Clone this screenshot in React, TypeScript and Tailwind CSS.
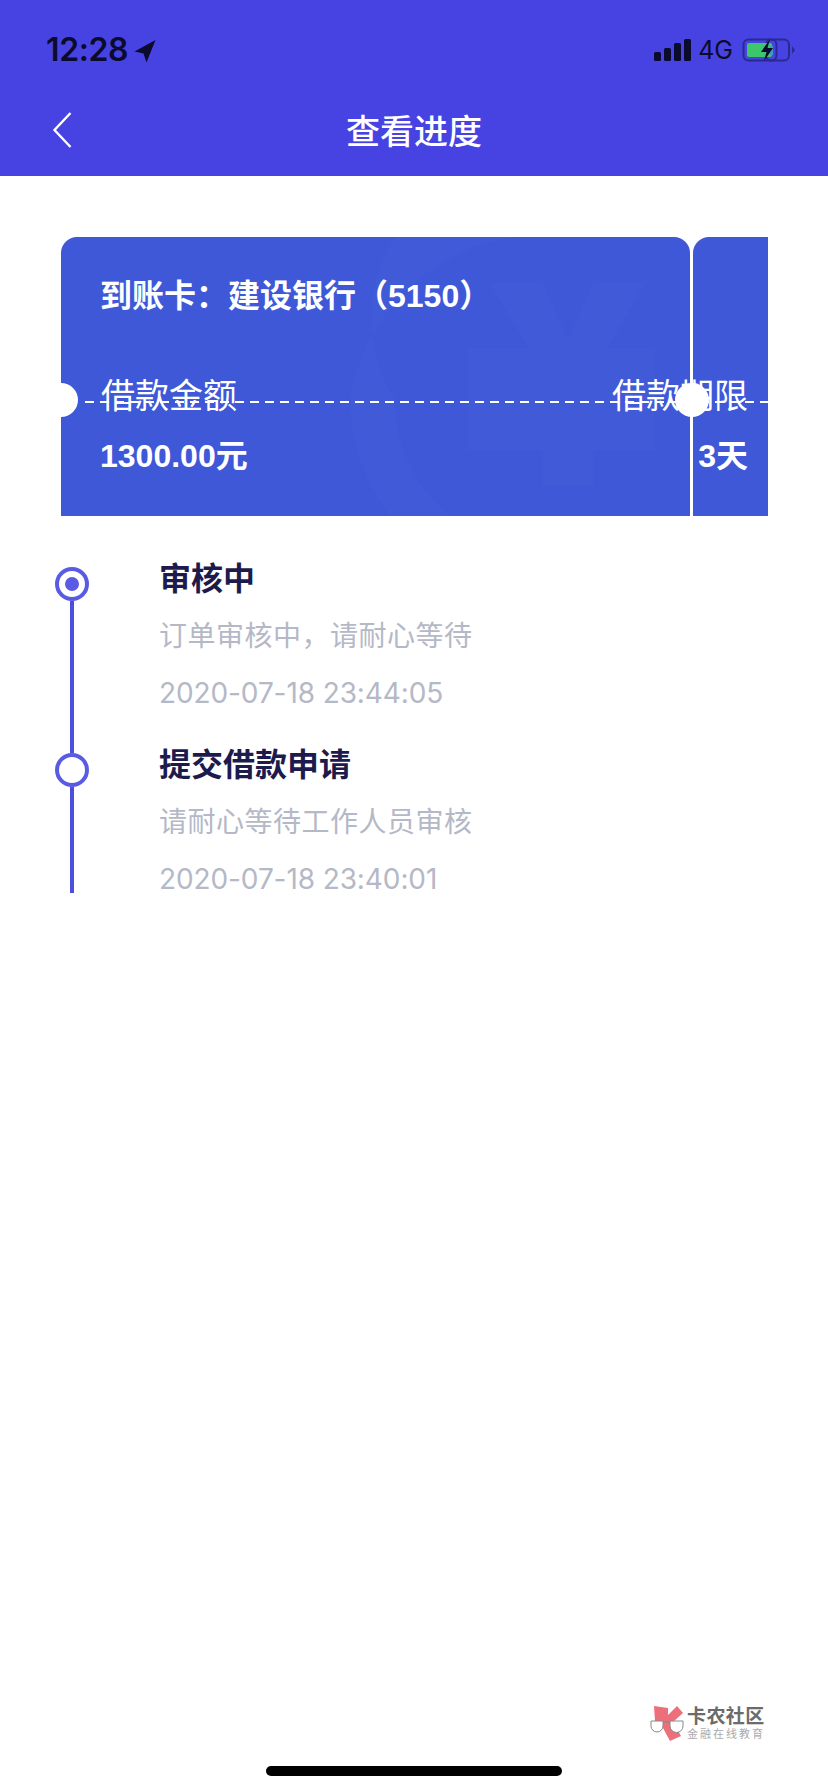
const font = "font-['Inter','Noto_Sans_CJK_SC',sans-serif]"
const boldFont = "font-['Liberation_Sans','Noto_Sans_CJK_SC',sans-serif]"

function StatusBar() {
  return (
    <div className="flex h-[98px] items-center justify-between pl-[46px] pr-[32px] pt-[2px] text-[#0b0b2e]">
      <div className="flex items-center gap-[6px]">
        <span className="text-[32px] leading-none font-semibold tracking-[-0.4px]">12:28</span>
        <svg width="22" height="24" viewBox="0 0 22 24" className="mt-[1px]">
          <path d="M21.5 1 L0.5 12.5 L9.5 14.5 L12.5 23.5 Z" fill="#0b0b2e" />
        </svg>
      </div>
      <div className="flex items-center">
        <svg width="38" height="24" viewBox="0 0 38 24">
          <rect x="0" y="14" width="7" height="9" rx="1.5" fill="#0b0b2e" />
          <rect x="10" y="10" width="7" height="13" rx="1.5" fill="#0b0b2e" />
          <rect x="20" y="5" width="7" height="18" rx="1.5" fill="#0b0b2e" />
          <rect x="30" y="1" width="7" height="22" rx="1.5" fill="#0b0b2e" />
        </svg>
        <span className="ml-[6px] text-[25px] leading-none">4G</span>
        <svg width="54" height="26" viewBox="0 0 54 26" className="ml-[9px]">
          <rect x="1.5" y="2.5" width="33" height="21" rx="5" fill="none" stroke="#2a2a8e" strokeWidth="2" />
          <rect x="24" y="2.5" width="23" height="21" rx="5" fill="none" stroke="#2a2a8e" strokeWidth="2" />
          <rect x="5" y="6" width="25" height="14" rx="2" fill="#3cc86a" />
          <rect x="28" y="9" width="3" height="9" fill="#3f9bc0" />
          <path d="M50 9 L53 13 L50 17 Z" fill="#2a2a8e" />
          <path d="M28 2 L19 15 L24.5 15 L22 24 L31 11 L25.5 11 Z" fill="#0b0b2e" />
        </svg>
      </div>
    </div>
  )
}

function Ticket() {
  return (
    <div className="relative mx-[61px] mt-[61px] h-[279px] w-[707px] text-white">
      {/* ticket panels */}
      <div className="absolute inset-0 flex gap-[3px]">
        <div className="w-[629px] rounded-t-[16px] bg-[#3e58d8]" />
        <div className="flex-1 rounded-tl-[16px] bg-[#3e58d8]" />
      </div>

      {/* faint yen watermark */}
      <svg className="absolute left-[289px] top-0" width="340" height="279" viewBox="0 0 340 279">
        <path d="M0 163 A 195 195 0 0 1 163 0 L300 0 A 150 150 0 0 0 45 163 A 150 150 0 0 0 100 279 L40 279 A 195 195 0 0 1 0 163 Z" fill="#ffffff" fillOpacity="0.016" />
        <path d="M140 46 L193 46 L218 103 L243 46 L295 46 L258 111 L305 111 L305 213 L243 213 L243 250 L193 250 L193 213 L118 213 L118 111 L178 111 Z" fill="#ffffff" fillOpacity="0.014" />
      </svg>

      <div className="relative flex h-full flex-col pl-[40px] pr-[20px]">
        <div className={`ml-[-1px] mt-[37px] h-[44px] text-[32px] leading-[44px] font-semibold ${boldFont}`}>到账卡：建设银行（5150）</div>
        <div className="mt-[54px] flex h-[48px] items-center justify-between text-[34px] leading-[48px]">
          <span>借款金额</span>
          <span>借款期限</span>
        </div>
        <div className={`ml-[-1px] mt-[14px] flex h-[44px] items-center justify-between text-[32px] leading-[44px] font-semibold ${boldFont}`}>
          <span>1300.00元</span>
          <span>3天</span>
        </div>
      </div>

      {/* perforation */}
      <div className="absolute left-[24px] right-0 top-[164px] h-[2px] bg-[repeating-linear-gradient(90deg,#fff_0,#fff_9px,transparent_9px,transparent_15px)]" />
      <div className="absolute left-0 top-[146px] h-[34px] w-[17px] rounded-r-full bg-white" />
      <div className="absolute left-[614px] top-[146px] h-[34px] w-[34px] rounded-full bg-white" />
    </div>
  )
}

const steps = [
  { title: '审核中', note: '订单审核中，请耐心等待', time: '2020-07-18 23:44:05', active: true, height: 'h-[186px]' },
  { title: '提交借款申请', note: '请耐心等待工作人员审核', time: '2020-07-18 23:40:01', active: false, height: 'h-[140px]' },
]

function Timeline() {
  return (
    <div className="mt-[51px] h-[377px] pl-[55px]">
      {steps.map((step) => (
        <div key={step.title} className={`flex ${step.height}`}>
          <div className="flex w-[34px] flex-col items-center">
            <div className="flex h-[34px] w-[34px] shrink-0 items-center justify-center rounded-full border-[4px] border-[#5a5be3] bg-white">
              {step.active && <div className="h-[14px] w-[14px] rounded-full bg-[#5a5be3]" />}
            </div>
            <div className="w-[4px] flex-1 bg-[#4c4fdc]" />
          </div>
          <div className="ml-[70px] mt-[-10px]">
            <div className="h-[44px] text-[32px] leading-[44px] font-semibold text-[#1d1b4d]">{step.title}</div>
            <div className="mt-[15px] h-[40px] text-[28px] leading-[40px] tracking-[0.5px] text-[#b5b8c6]">{step.note}</div>
            <div className="mt-[17px] h-[40px] text-[28px] leading-[40px] tracking-[-0.1px] text-[#b5b8c6]">{step.time}</div>
          </div>
        </div>
      ))}
    </div>
  )
}

function Watermark() {
  return (
    <div className="flex items-center justify-end pr-[63px]">
      <svg width="34" height="36" viewBox="0 0 34 36">
        <path d="M4 1 L18 3 L18 10 L27 1 L33 8 L23 17 L31 31 L20 36 L13 23 L5 16 Z" fill="#ec6f7a" />
        <path d="M1 16 L1 21 A 6 6 0 0 0 13 21 L13 16 Z" fill="#fff" stroke="#888" strokeWidth="1" />
        <path d="M20 16 L20 21 A 6.5 6.5 0 0 0 33 21 L33 16 Z" fill="#fff" stroke="#888" strokeWidth="1" />
        <path d="M13 17 L20 17" stroke="#888" strokeWidth="1" />
      </svg>
      <div className="ml-[3px] flex w-[78px] flex-col">
        <span className="text-[19px] leading-[22px] font-bold tracking-[0.4px] text-[#6b6b6b]">卡农社区</span>
        <span className="text-[11px] leading-[13px] tracking-[2px] text-[#aaaaaa]">金融在线教育</span>
      </div>
    </div>
  )
}

export default function App() {
  return (
    <div className={`flex h-[1792px] w-[828px] flex-col overflow-hidden bg-white ${font}`}>
      <header className="h-[176px] bg-[#4743e3]">
        <StatusBar />
        <div className="relative flex h-[70px] items-center justify-center">
          <svg className="absolute left-[52px] top-[13px]" width="20" height="38" viewBox="0 0 20 38">
            <path d="M18.5 2 L2.5 19 L18.5 36" fill="none" stroke="#fff" strokeWidth="2.4" />
          </svg>
          <h1 className="mt-[-4px] text-[34px] font-medium text-white">查看进度</h1>
        </div>
      </header>
      <Ticket />
      <Timeline />
      <div className="flex-1" />
      <Watermark />
      <div className="mt-[25px] mb-[16px] flex justify-center">
        <div className="h-[10px] w-[296px] rounded-full bg-black" />
      </div>
    </div>
  )
}
